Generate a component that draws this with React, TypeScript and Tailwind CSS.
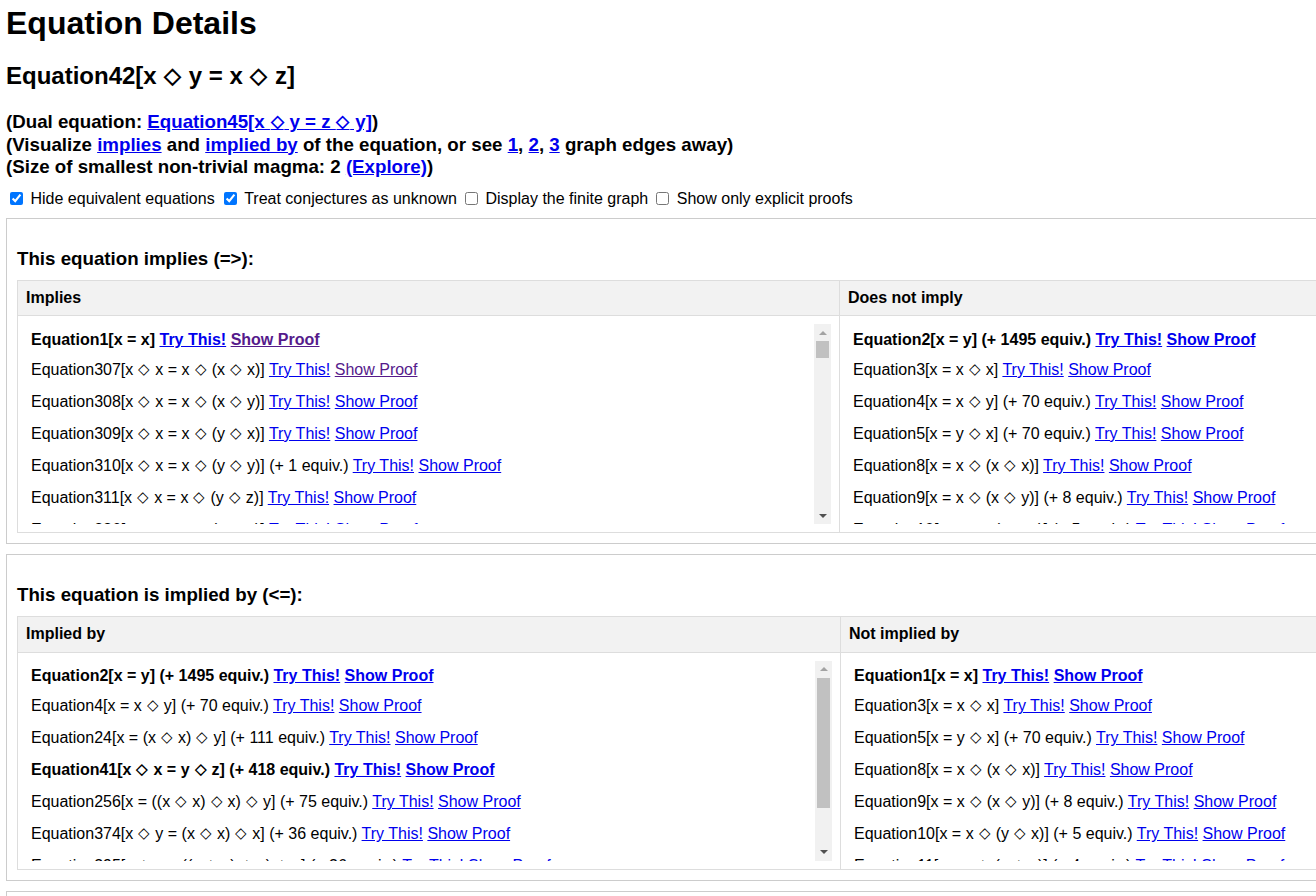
import type { ReactNode } from 'react';

type Row = {
  eq: string;
  equiv?: string;
  bold?: boolean;
  visited?: boolean;
};

const IMPLIES: Row[] = [
  { eq: 'Equation1[x = x]', bold: true, visited: true },
  { eq: 'Equation307[x ◇ x = x ◇ (x ◇ x)]', visited: true },
  { eq: 'Equation308[x ◇ x = x ◇ (x ◇ y)]' },
  { eq: 'Equation309[x ◇ x = x ◇ (y ◇ x)]' },
  { eq: 'Equation310[x ◇ x = x ◇ (y ◇ y)]', equiv: '1' },
  { eq: 'Equation311[x ◇ x = x ◇ (y ◇ z)]' },
  { eq: 'Equation326[x ◇ x = y ◇ (x ◇ x)]' },
  { eq: 'Equation327[x ◇ x = y ◇ (x ◇ y)]' },
];

const DOES_NOT_IMPLY: Row[] = [
  { eq: 'Equation2[x = y]', equiv: '1495', bold: true },
  { eq: 'Equation3[x = x ◇ x]' },
  { eq: 'Equation4[x = x ◇ y]', equiv: '70' },
  { eq: 'Equation5[x = y ◇ x]', equiv: '70' },
  { eq: 'Equation8[x = x ◇ (x ◇ x)]' },
  { eq: 'Equation9[x = x ◇ (x ◇ y)]', equiv: '8' },
  { eq: 'Equation10[x = x ◇ (y ◇ x)]', equiv: '5' },
  { eq: 'Equation11[x = x ◇ (y ◇ y)]', equiv: '4' },
];

const IMPLIED_BY: Row[] = [
  { eq: 'Equation2[x = y]', equiv: '1495', bold: true },
  { eq: 'Equation4[x = x ◇ y]', equiv: '70' },
  { eq: 'Equation24[x = (x ◇ x) ◇ y]', equiv: '111' },
  { eq: 'Equation41[x ◇ x = y ◇ z]', equiv: '418', bold: true },
  { eq: 'Equation256[x = ((x ◇ x) ◇ x) ◇ y]', equiv: '75' },
  { eq: 'Equation374[x ◇ y = (x ◇ x) ◇ x]', equiv: '36' },
  { eq: 'Equation395[x ◇ y = ((x ◇ x) ◇ x) ◇ x]', equiv: '36' },
  { eq: 'Equation412[x ◇ y = x ◇ (x ◇ (x ◇ x))]', equiv: '12' },
];

const NOT_IMPLIED_BY: Row[] = [
  { eq: 'Equation1[x = x]', bold: true },
  { eq: 'Equation3[x = x ◇ x]' },
  { eq: 'Equation5[x = y ◇ x]', equiv: '70' },
  { eq: 'Equation8[x = x ◇ (x ◇ x)]' },
  { eq: 'Equation9[x = x ◇ (x ◇ y)]', equiv: '8' },
  { eq: 'Equation10[x = x ◇ (y ◇ x)]', equiv: '5' },
  { eq: 'Equation11[x = x ◇ (y ◇ y)]', equiv: '4' },
  { eq: 'Equation12[x = x ◇ (y ◇ z)]', equiv: '2' },
];

const link = 'text-[#0000EE] underline';
const visitedLink = 'text-[#551A8B] underline';

// the diamond comes from a fallback font, shrink it a bit so it looks like the original
const dia = (s: string): ReactNode[] =>
  s.split('◇').flatMap((part, i) =>
    i === 0
      ? [part]
      : [
          <span key={i} className="text-[0.92em] leading-none px-[0.04em] align-[1px]">
            ◇
          </span>,
          part,
        ],
  );

const EqRow = ({ row, first }: { row: Row; first: boolean }) => (
  <div
    className={`${first ? 'h-[30px]' : 'h-[32px]'} ${row.bold ? 'font-bold' : ''} leading-[18px] whitespace-nowrap`}
  >
    {dia(row.eq)}
    {row.equiv ? ` (+ ${row.equiv} equiv.)` : ''}{' '}
    <a className={link}>Try This!</a>{' '}
    <a className={row.visited ? visitedLink : link}>Show Proof</a>
  </div>
);

const ScrollBar = ({ thumb }: { thumb: string }) => (
  <div className="w-[17px] shrink-0 bg-[#f1f1f1] flex flex-col">
    <div className="h-[17px] flex items-center justify-center">
      <div className="w-0 h-0 border-x-[4px] border-x-transparent border-b-[4px] border-b-[#a3a3a3]" />
    </div>
    <div className="flex-1 px-[2px]">
      <div className={`${thumb} bg-[#c1c1c1]`} />
    </div>
    <div className="h-[17px] flex items-center justify-center">
      <div className="w-0 h-0 border-x-[4px] border-x-transparent border-t-[4px] border-t-[#505050]" />
    </div>
  </div>
);

const EqList = ({ rows, thumb }: { rows: Row[]; thumb: string }) => (
  <div className="h-[200px] flex overflow-hidden">
    <div className="flex-1 pl-[5px] pt-[6.5px] overflow-hidden">
      {rows.map((row, i) => (
        <EqRow key={i} row={row} first={i === 0} />
      ))}
    </div>
    <ScrollBar thumb={thumb} />
  </div>
);

type SectionProps = {
  title: string;
  leftHeader: string;
  rightHeader: string;
  leftRows: Row[];
  rightRows: Row[];
  leftWidth: string;
  thumb: string;
};

const Section = ({ title, leftHeader, rightHeader, leftRows, rightRows, leftWidth, thumb }: SectionProps) => (
  <div className="w-max border border-[#ccc] p-[10px] mb-[10px]">
    <h3 className="mt-[18.5px] mb-[10.5px] text-[18.72px] leading-[22px] font-bold">{title}</h3>
    <div className="border border-[#ddd]">
      <div className="flex bg-[#f2f2f2] border-b border-[#ddd] font-bold leading-[18.4px]">
        <div className={`${leftWidth} p-2`}>{leftHeader}</div>
        <div className="w-[821px] p-2 border-l border-[#ddd]">{rightHeader}</div>
      </div>
      <div className="flex">
        <div className={`${leftWidth} p-2`}>
          <EqList rows={leftRows} thumb={thumb} />
        </div>
        <div className="w-[821px] p-2 border-l border-[#ddd]">
          <EqList rows={rightRows} thumb="h-[40px]" />
        </div>
      </div>
    </div>
  </div>
);

const OPTIONS = [
  { label: 'Hide equivalent equations', checked: true },
  { label: 'Treat conjectures as unknown', checked: true },
  { label: 'Display the finite graph', checked: false },
  { label: 'Show only explicit proofs', checked: false },
];

export default function App() {
  return (
    <div className="w-[1316px] h-[896px] overflow-hidden bg-white text-black font-['Liberation_Sans',Arial,sans-serif] text-[16px]">
      <div className="px-[6px]">
        <h1 className="mt-[5px] text-[32px] leading-[37px] font-bold">Equation Details</h1>
        <h2 className="mt-[20px] text-[24px] leading-[28px] font-bold">{dia('Equation42[x ◇ y = x ◇ z]')}</h2>

        <div className="mt-[21px] text-[18.72px] leading-[22.5px] font-bold">
          <div>
            (Dual equation: <a className={link}>{dia('Equation45[x ◇ y = z ◇ y]')}</a>)
          </div>
          <div>
            (Visualize <a className={link}>implies</a> and <a className={link}>implied by</a> of the
            equation, or see <a className={link}>1</a>, <a className={link}>2</a>,{' '}
            <a className={link}>3</a> graph edges away)
          </div>
          <div>
            (Size of smallest non-trivial magma: 2 <a className={link}>(Explore)</a>)
          </div>
        </div>

        <div className="mt-[7px] h-[26px] flex items-center gap-[4px]">
          {OPTIONS.map((opt, i) => (
            <label key={opt.label} className={`${i === 1 ? 'ml-[1px]' : ''} inline-flex items-center`}>
              <input
                type="checkbox"
                defaultChecked={opt.checked}
                className="ml-[4px] mr-[3px] w-[13px] h-[13px]"
              />
              <span className="ml-[4.5px]">{opt.label}</span>
            </label>
          ))}
        </div>

        <div className="mt-[6.5px]">
          <Section
            title="This equation implies (=>):"
            leftHeader="Implies"
            rightHeader="Does not imply"
            leftRows={IMPLIES}
            rightRows={DOES_NOT_IMPLY}
            leftWidth="w-[821px]"
            thumb="h-[17px]"
          />
          <Section
            title="This equation is implied by (<=):"
            leftHeader="Implied by"
            rightHeader="Not implied by"
            leftRows={IMPLIED_BY}
            rightRows={NOT_IMPLIED_BY}
            leftWidth="w-[822px]"
            thumb="h-[130px]"
          />
          <div className="w-[1660px] border border-[#ccc] p-[10px]">
            <h3 className="mt-[18.5px] mb-[10.5px] text-[18.72px] leading-[22px] font-bold">
              Equivalent equations:
            </h3>
          </div>
        </div>
      </div>
    </div>
  );
}
